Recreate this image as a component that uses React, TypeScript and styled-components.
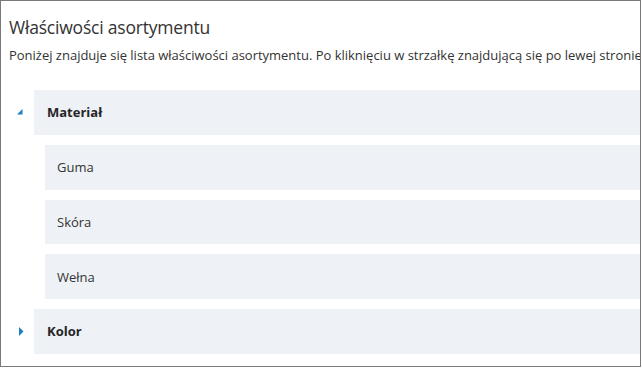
import styled, { createGlobalStyle } from "styled-components";

const GlobalStyle = createGlobalStyle`
  html, body {
    margin: 0;
    padding: 0;
    background: #ffffff;
  }
  body {
    font-family: "Open Sans", "Noto Sans", Arial, sans-serif;
    color: #333333;
  }
`;

const Frame = styled.div`
  box-sizing: border-box;
  width: 641px;
  height: 367px;
  border: 1px solid #7a7a7a;
  overflow: hidden;
  padding: 14px 0 0 0;
`;

const Title = styled.h1`
  margin: 0 0 0 8px;
  font-size: 17.5px;
  letter-spacing: -0.2px;
  line-height: 24px;
  font-weight: 400;
  color: #333333;
  white-space: nowrap;
`;

const Description = styled.p`
  margin: 7px 0 0 8px;
  font-size: 13px;
  line-height: 18px;
  letter-spacing: -0.01px;
  color: #333333;
  white-space: nowrap;
`;

const Tree = styled.div`
  margin-top: 26px;
  display: flex;
  flex-direction: column;
  gap: 10px;
`;

const Node = styled.div<{ $level: number }>`
  display: flex;
  align-items: stretch;
  padding-left: ${(p) => (p.$level === 0 ? 0 : 44)}px;
`;

const Toggle = styled.div`
  box-sizing: border-box;
  width: 33px;
  flex: none;
  display: flex;
  align-items: center;
  padding-left: 16px;
`;

const Row = styled.div<{ $group: boolean }>`
  flex: 1;
  height: 44.75px;
  display: flex;
  align-items: center;
  background: #eef2f6;
  padding-left: ${(p) => (p.$group ? 13 : 12)}px;
  font-size: 13px;
  font-weight: ${(p) => (p.$group ? 700 : 400)};
  color: ${(p) => (p.$group ? "#262626" : "#333333")};
`;

const ArrowOpen = () => (
  <svg width="6" height="6" viewBox="0 0 6 6" style={{ marginTop: -1 }}>
    <polygon points="0,5.5 5.5,5.5 5.5,0" fill="#1f7fc4" />
  </svg>
);

const ArrowClosed = () => (
  <svg width="5" height="9" viewBox="0 0 5 9" style={{ marginLeft: 2 }}>
    <polygon points="0,0 4.5,4.5 0,9" fill="#1f7fc4" />
  </svg>
);

type Item = { label: string; children?: string[]; open?: boolean };

const items: Item[] = [
  { label: "Materiał", open: true, children: ["Guma", "Skóra", "Wełna"] },
  { label: "Kolor", open: false, children: [] },
];

export default function App() {
  return (
    <>
      <GlobalStyle />
      <Frame>
        <Title>Właściwości asortymentu</Title>
        <Description>
          Poniżej znajduje się lista właściwości asortymentu. Po kliknięciu w strzałkę znajdującą się po lewej stronie
        </Description>
        <Tree>
          {items.map((it) => (
            <>
              <Node key={it.label} $level={0}>
                <Toggle>{it.open ? <ArrowOpen /> : <ArrowClosed />}</Toggle>
                <Row $group>{it.label}</Row>
              </Node>
              {it.open &&
                it.children?.map((c) => (
                  <Node key={c} $level={1}>
                    <Row $group={false}>{c}</Row>
                  </Node>
                ))}
            </>
          ))}
        </Tree>
      </Frame>
    </>
  );
}
